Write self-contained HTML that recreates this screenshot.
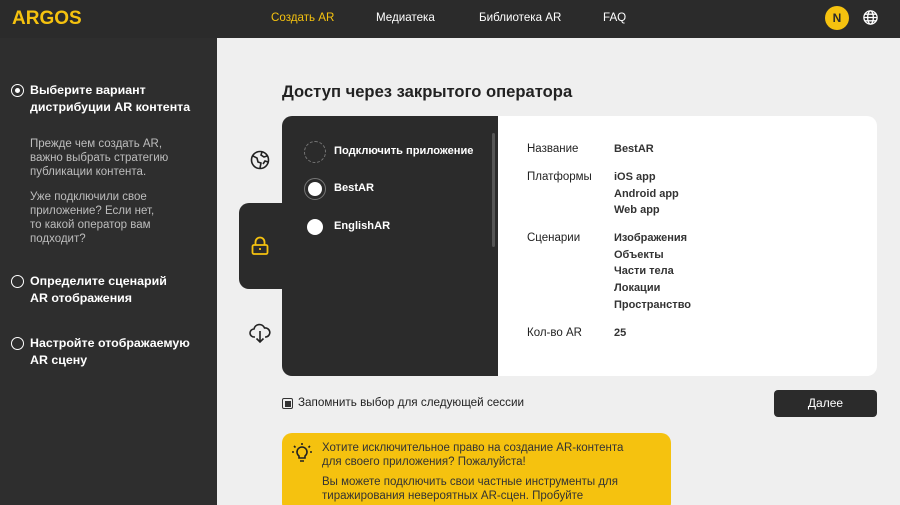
<!DOCTYPE html>
<html><head><meta charset="utf-8"><style>
*{margin:0;padding:0;box-sizing:border-box}
html,body{width:900px;height:505px;overflow:hidden}
body{background:#efefef;font-family:"Liberation Sans",sans-serif;position:relative}
.hdr{position:absolute;left:0;top:0;width:900px;height:38px;background:#2b2b2b}
.logo{position:absolute;left:12px;top:8px;color:#f5c20f;font-size:19px;font-weight:bold}
.nav{position:absolute;top:11px;font-size:11.6px;color:#fff}
.side{position:absolute;left:0;top:38px;width:217px;height:467px;background:#2e2e2e;color:#fff}
.step{position:absolute;left:30px;font-size:12.4px;font-weight:bold;line-height:17px}
.rad{position:absolute;left:-19px;top:2px;width:13px;height:13px;border:1.6px solid #fff;border-radius:50%}
.desc{position:absolute;left:30px;font-size:11.5px;line-height:14px;color:#bdbdbd}
.dark{position:absolute;left:282px;top:116px;width:217px;height:260px;background:#2b2b2b;border-radius:10px 0 0 10px}
.tab{position:absolute;left:239px;top:203px;width:50px;height:86px;background:#2b2b2b;border-radius:10px 0 0 10px}
.card{position:absolute;left:498px;top:116px;width:379px;height:260px;background:#fff;border-radius:0 10px 10px 0;font-size:11.5px;color:#222}
.opt{position:absolute;left:334px;font-size:11.1px;color:#fff;font-weight:bold}
.lbl{position:absolute;left:29px}
.val{position:absolute;left:116px;line-height:16.7px;font-weight:bold;color:#333;font-size:11px}
</style></head><body>
<div class="hdr">
<div class="logo">ARGOS</div>
<div class="nav" style="left:271px;color:#f5c20f">Создать AR</div>
<div class="nav" style="left:376px">Медиатека</div>
<div class="nav" style="left:479px">Библиотека AR</div>
<div class="nav" style="left:603px">FAQ</div>
<div style="position:absolute;left:825px;top:6px;width:24px;height:24px;border-radius:50%;background:#f5c20f;color:#2b2b2b;font-size:12px;font-weight:bold;text-align:center;line-height:24px">N</div>
<svg style="position:absolute;left:862px;top:9px" width="17" height="17" viewBox="0 0 18 18" fill="none" stroke="#fff" stroke-width="1.4"><circle cx="9" cy="9" r="7"/><ellipse cx="9" cy="9" rx="3" ry="7"/><path d="M2 9h14M3 5.5h12M3 12.5h12"/></svg>
</div>
<div class="side">
<div class="step" style="top:44px"><span class="rad"><span style="position:absolute;left:2.5px;top:2.5px;width:5px;height:5px;border-radius:50%;background:#fff"></span></span>Выберите вариант<br>дистрибуции AR контента</div>
<div class="desc" style="top:99px">Прежде чем создать AR,<br>важно выбрать стратегию<br>публикации контента.</div>
<div class="desc" style="top:152px">Уже подключили свое<br>приложение? Если нет,<br>то какой оператор вам<br>подходит?</div>
<div class="step" style="top:235px"><span class="rad"></span>Определите сценарий<br>AR отображения</div>
<div class="step" style="top:297px"><span class="rad"></span>Настройте отображаемую<br>AR сцену</div>
</div>
<div style="position:absolute;left:282px;top:82px;font-size:16.6px;font-weight:bold;color:#222">Доступ через закрытого оператора</div>
<svg style="position:absolute;left:250px;top:150px" width="20" height="20" viewBox="0 0 20 20" fill="none" stroke="#222" stroke-width="1.6"><circle cx="10" cy="10" r="8.5"/><path d="M3 6l4 2 1 4 3 1-1 5M12 2l-1 3 3 2 3-1M18 12l-3-1-2 3"/></svg>
<div class="tab"></div>
<div class="dark"></div>
<svg style="position:absolute;left:250px;top:236px" width="20" height="20" viewBox="0 0 20 20" fill="none" stroke="#f5c20f" stroke-width="1.8"><rect x="2.5" y="9" width="15" height="9" rx="1.5"/><path d="M5.5 9V6a4.5 4.5 0 0 1 9 0v3"/><path d="M10 12v2"/></svg>
<svg style="position:absolute;left:249px;top:322px" width="22" height="22" viewBox="0 0 22 22" fill="none" stroke="#222" stroke-width="1.6"><path d="M6 15H5a4 4 0 0 1 0-8 5.5 5.5 0 0 1 10.5-1A4.5 4.5 0 0 1 17 15h-1"/><path d="M11 9v11M7.5 16.5 11 20l3.5-3.5"/></svg>
<div style="position:absolute;left:492px;top:133px;width:3px;height:114px;background:#555;border-radius:2px"></div>
<div style="position:absolute;left:304px;top:141px;width:22px;height:22px;border:1.3px dashed #777;border-radius:50%"></div>
<div class="opt" style="top:145px">Подключить приложение</div>
<div style="position:absolute;left:304px;top:178px;width:22px;height:22px;border:1.5px solid #777;border-radius:50%;background:#2b2b2b"><div style="position:absolute;left:2.5px;top:2.5px;width:14px;height:14px;border-radius:50%;background:#fff"></div></div>
<div class="opt" style="top:182px">BestAR</div>
<div style="position:absolute;left:307px;top:219px;width:16px;height:16px;border-radius:50%;background:#fff"></div>
<div class="opt" style="top:220px">EnglishAR</div>
<div class="card">
<div class="lbl" style="top:27px">Название</div><div class="val" style="top:25px">BestAR</div>
<div class="lbl" style="top:55px">Платформы</div><div class="val" style="top:53px">iOS app<br>Android app<br>Web app</div>
<div class="lbl" style="top:116px">Сценарии</div><div class="val" style="top:114px">Изображения<br>Объекты<br>Части тела<br>Локации<br>Пространство</div>
<div class="lbl" style="top:211px">Кол-во AR</div><div class="val" style="top:209px">25</div>
</div>
<div style="position:absolute;left:282px;top:398px;width:11px;height:11px;border:1.3px solid #333;border-radius:2px"><div style="position:absolute;left:1.5px;top:1.5px;width:6px;height:6px;background:#333"></div></div>
<div style="position:absolute;left:298px;top:396px;font-size:11.7px;color:#222">Запомнить выбор для следующей сессии</div>
<div style="position:absolute;left:774px;top:390px;width:103px;height:27px;background:#2b2b2b;border-radius:4px;color:#fff;font-size:12px;text-align:center;line-height:27px">Далее</div>
<div style="position:absolute;left:282px;top:433px;width:389px;height:80px;background:#f5c20f;border-radius:10px;font-size:11.5px;color:#333;line-height:14px">
<svg style="position:absolute;left:8px;top:8px" width="24" height="24" viewBox="0 0 24 24" fill="none" stroke="#222" stroke-width="1.6"><path d="M9 17v-2a5 5 0 1 1 6 0v2zM10 20h4M12 2v2M4 5l1.5 1.5M20 5l-1.5 1.5M2 11h2M20 11h2"/></svg>
<div style="position:absolute;left:40px;top:8px">Хотите исключительное право на создание AR-контента<br>для своего приложения? Пожалуйста!</div>
<div style="position:absolute;left:40px;top:42px">Вы можете подключить свои частные инструменты для<br>тиражирования невероятных AR-сцен. Пробуйте</div>
</div>
</body></html>
